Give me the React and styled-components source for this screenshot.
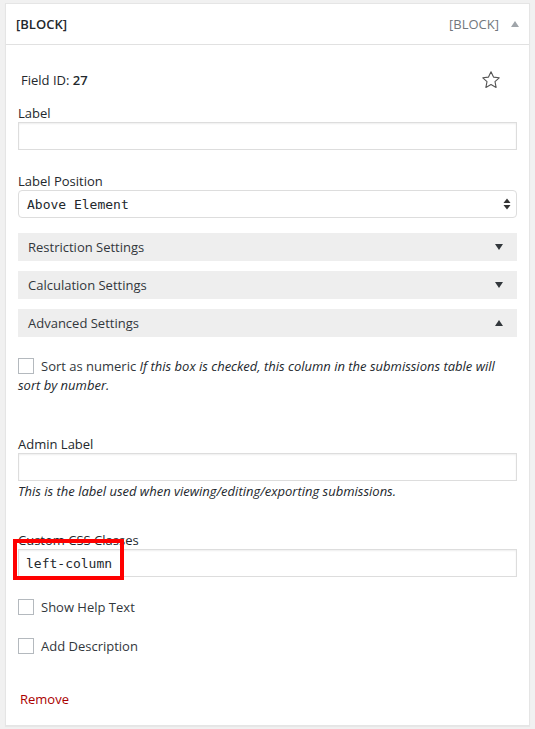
import React from 'react'
import styled, { createGlobalStyle } from 'styled-components'

const GlobalStyle = createGlobalStyle`
	body {
		margin: 0;
		background: #f1f1f1;
		font-family: "Open Sans", "Liberation Sans", sans-serif;
		font-size: 13px;
		color: #444;
	}
`

const Page = styled.div`
	padding: 3px 5px 3px 5px;
	width: 535px;
	box-sizing: border-box;
`

const Panel = styled.div`
	background: #fff;
	border: 1px solid #e5e5e5;
	box-shadow: 0 1px 1px rgba(0, 0, 0, 0.04);
`

const Header = styled.div`
	display: flex;
	align-items: center;
	height: 40px;
	padding: 0 10px 0 10px;
	border-bottom: 1px solid #e1e1e1;
	color: #23282d;
`

const HeaderTitle = styled.span`
	flex: 1;
	font-weight: 600;
	font-size: 13px;
`

const HeaderType = styled.span`
	color: #72777c;
	font-size: 13px;
	margin-right: 12px;
`

const Body = styled.div`
	padding: 23px 12px 16px 12px;
	display: flex;
	flex-direction: column;
	align-items: stretch;
`

const IdRow = styled.div`
	display: flex;
	align-items: center;
	justify-content: space-between;
	padding: 0 16px 0 3px;
	height: 24px;
	margin-bottom: 12px;
	color: #23282d;
`

const Strong = styled.b`
	font-weight: 600;
`

const Field = styled.div`
	display: flex;
	flex-direction: column;
	margin-top: ${p => p.$mt || 0}px;
	margin-bottom: ${p => p.$mb || 0}px;
`

const Label = styled.label`
	color: #23282d;
	line-height: 18px;
`

const TextInput = styled.div`
	height: 28px;
	box-sizing: border-box;
	border: 1px solid #ddd;
	box-shadow: inset 0 1px 2px rgba(0, 0, 0, 0.07);
	background: #fff;
	display: flex;
	align-items: center;
	padding: 0 7px;
	font-family: "DejaVu Sans Mono", "Liberation Mono", monospace;
	font-size: 13px;
	color: #23282d;
	position: relative;
`

const Select = styled.div`
	height: 28px;
	box-sizing: border-box;
	border: 1px solid #ddd;
	border-radius: 4px;
	background: #fff;
	display: flex;
	align-items: center;
	justify-content: space-between;
	padding: 0 5px 0 8px;
	font-family: "DejaVu Sans Mono", "Liberation Mono", monospace;
	font-size: 13px;
	color: #23282d;
`

const Accordion = styled.div`
	display: flex;
	align-items: center;
	justify-content: space-between;
	height: 28px;
	background: #eee;
	padding: 0 14px 0 10px;
	margin-bottom: 10px;
	color: #32373c;
`

const Caret = styled.span`
	width: 0;
	height: 0;
	border-left: 4px solid transparent;
	border-right: 4px solid transparent;
	${p => (p.$up ? 'border-bottom: 6px solid #32373c;' : 'border-top: 6px solid #32373c;')}
`

const HeaderCaret = styled(Caret)`
	border-bottom-color: #a0a5aa;
`

const CheckLine = styled.div`
	line-height: 19px;
	color: #32373c;
	margin-top: ${p => p.$mt || 0}px;
`

const Box = styled.span`
	display: inline-block;
	width: 16px;
	height: 16px;
	box-sizing: border-box;
	border: 1px solid #b4b9be;
	background: #fff;
	vertical-align: -3px;
	margin-right: 7px;
`

const Hint = styled.em`
	color: #23282d;
`

const Desc = styled.div`
	font-style: italic;
	color: #23282d;
	margin-top: 2px;
	line-height: 17px;
`

const Highlight = styled.span`
	position: absolute;
	left: -6px;
	top: -11px;
	width: 111px;
	height: 41px;
	box-sizing: border-box;
	border: 4px solid #f00;
	pointer-events: none;
`

const Remove = styled.a`
	align-self: flex-start;
	color: #a00;
	margin: 34px 0 0 2px;
	text-decoration: none;
	line-height: 19px;
`

const Star = () => (
	<svg width="20" height="20" viewBox="0 0 20 20">
		<path
			d="M10 1.8l2.5 5.3 5.7.7-4.2 3.9 1.1 5.7L10 14.6l-5.1 2.8 1.1-5.7-4.2-3.9 5.7-.7z"
			fill="none"
			stroke="#555"
			strokeWidth="1.1"
			strokeLinejoin="round"
		/>
	</svg>
)

const Updown = () => (
	<svg width="8" height="12" viewBox="0 0 8 12">
		<path d="M4 0.5L7.5 5H0.5z" fill="#333" />
		<path d="M4 11.5L7.5 7H0.5z" fill="#333" />
	</svg>
)

export default function App() {
	return (
		<Page>
			<GlobalStyle />
			<Panel>
				<Header>
					<HeaderTitle>[BLOCK]</HeaderTitle>
					<HeaderType>[BLOCK]</HeaderType>
					<HeaderCaret $up />
				</Header>
				<Body>
					<IdRow>
						<span>Field ID: <Strong>27</Strong></span>
						<Star />
					</IdRow>
					<Field $mb={22}>
						<Label>Label</Label>
						<TextInput />
					</Field>
					<Field $mb={15}>
						<Label>Label Position</Label>
						<Select>
							<span>Above Element</span>
							<Updown />
						</Select>
					</Field>
					<Accordion>
						<span>Restriction Settings</span>
						<Caret />
					</Accordion>
					<Accordion>
						<span>Calculation Settings</span>
						<Caret />
					</Accordion>
					<Accordion>
						<span>Advanced Settings</span>
						<Caret $up />
					</Accordion>
					<CheckLine $mt={10}>
						<Box />
						Sort as numeric <Hint>If this box is checked, this column in the submissions table will sort by number.</Hint>
					</CheckLine>
					<Field $mt={40}>
						<Label>Admin Label</Label>
						<TextInput />
						<Desc>This is the label used when viewing/editing/exporting submissions.</Desc>
					</Field>
					<Field $mt={31} $mb={12}>
						<Label>Custom CSS Classes</Label>
						<TextInput>
							left-column
							<Highlight />
						</TextInput>
					</Field>
					<CheckLine $mt={9}>
						<Box />
						Show Help Text
					</CheckLine>
					<CheckLine $mt={20}>
						<Box />
						Add Description
					</CheckLine>
					<Remove href="#">Remove</Remove>
				</Body>
			</Panel>
		</Page>
	)
}
